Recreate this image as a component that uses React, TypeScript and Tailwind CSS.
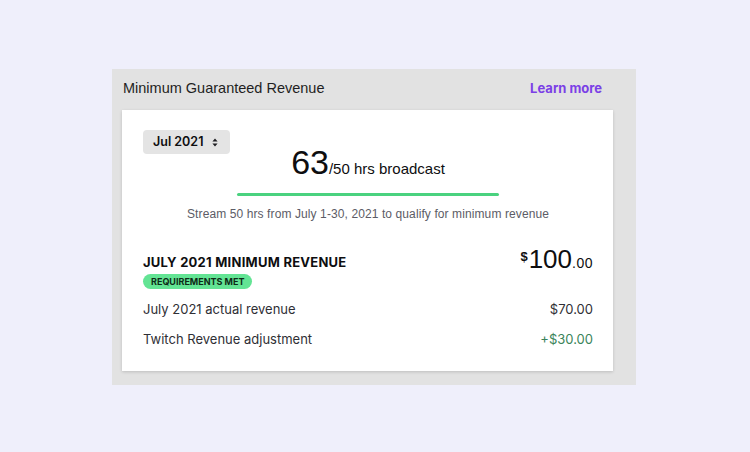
import React from "react";

const sans = { fontFamily: '"Liberation Sans", Arial, sans-serif' };
const inter = { fontFamily: 'Inter, "Noto Sans", sans-serif' };

function SortIcon() {
  return (
    <svg width="6" height="9" viewBox="0 0 6 9" className="text-[#1f1f23]">
      <path d="M3 0.4L5.6 3.4H0.4Z M3 8.6L0.4 5.6H5.6Z" fill="currentColor" />
    </svg>
  );
}

function MonthPicker() {
  return (
    <button
      className="flex h-[24px] w-[87px] items-center justify-between rounded-[4px] bg-[#e4e4e4] pl-[10px] pr-[12px] text-[12.5px] font-semibold text-[#0e0e10]"
      style={inter}
    >
      <span>Jul 2021</span>
      <SortIcon />
    </button>
  );
}

function Row({ label, value, tone = "text-[#2f2f35]" }: { label: string; value: string; tone?: string }) {
  return (
    <div className="flex items-center justify-between text-[13px] leading-[16px]">
      <span className="text-[#2f2f35]">{label}</span>
      <span className={tone}>{value}</span>
    </div>
  );
}

export default function App() {
  return (
    <div className="h-[452px] w-[750px] bg-[#efeffb] pl-[112px] pt-[69px]">
      <div className="h-[316px] w-[524px] bg-[#e2e2e2] pl-[10px] pr-[23px]">
        <div className="flex h-[41px] items-center justify-between pb-[3px] pl-px pr-[11px]">
          <span className="text-[14.5px] leading-[20px] text-[#1f1f23]" style={sans}>
            Minimum Guaranteed Revenue
          </span>
          <a className="text-[13px] font-bold leading-[20px] text-[#7b40e6]" style={inter}>
            Learn more
          </a>
        </div>

        <div className="h-[261px] bg-white pl-[21px] pr-[20px] pt-[20px] shadow-[0_1px_3px_rgba(0,0,0,0.16)]">
          <div className="grid">
            <div className="col-start-1 row-start-1 justify-self-start">
              <MonthPicker />
            </div>
            <div className="col-start-1 row-start-1 pt-[15px]" style={sans}>
              <div className="flex items-baseline justify-center text-[#0e0e10]">
                <span className="text-[34px] leading-[34px]">63</span>
                <span className="text-[15px] leading-[20px]">/50 hrs broadcast</span>
              </div>
              <div className="mx-auto mt-[14px] h-[3px] w-[262px] rounded-full bg-[#4ad27f]" />
              <p className="mt-[10px] text-center text-[12px] leading-[16px] tracking-[0.1px] text-[#5c5c66]">
                Stream 50 hrs from July 1-30, 2021 to qualify for minimum revenue
              </p>
            </div>
          </div>

          <div className="mt-[32px]" style={inter}>
            <div className="flex items-start justify-between">
              <div>
                <div className="text-[13px] font-bold leading-[16px] tracking-[0.25px] text-[#0e0e10]">
                  JULY 2021 MINIMUM REVENUE
                </div>
                <span className="mt-[4px] flex h-[15px] w-fit items-center rounded-full bg-[#63e494] px-[8px] text-[9px] font-bold text-[#0e2a17]">
                  REQUIREMENTS MET
                </span>
              </div>
              <div className="-mt-[8px] leading-[26px] text-[#0e0e10]" style={sans}>
                <span className="mr-px align-top text-[13px] font-bold leading-[22px]">$</span>
                <span className="text-[26px]">100</span>
                <span className="text-[14px] tracking-[0.5px]">.00</span>
              </div>
            </div>

            <div className="mt-[12px] flex flex-col gap-[14px]">
              <Row label="July 2021 actual revenue" value="$70.00" />
              <Row label="Twitch Revenue adjustment" value="+$30.00" tone="text-[#3a845a]" />
            </div>
          </div>
        </div>
      </div>
    </div>
  );
}
